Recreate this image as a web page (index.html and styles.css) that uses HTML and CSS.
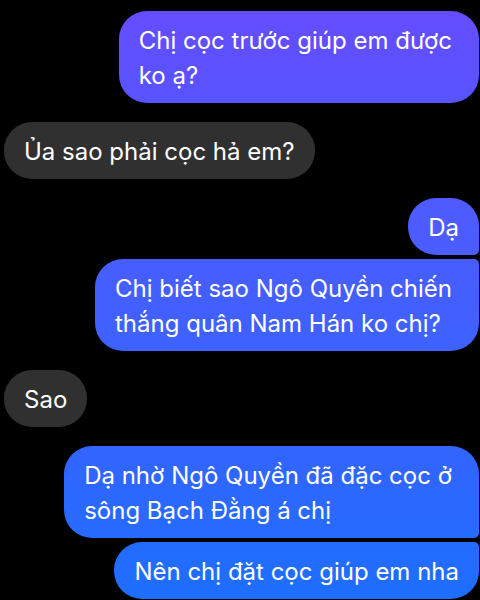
FILE: index.html
```html
<!DOCTYPE html>
<html lang="vi">
<head>
<meta charset="utf-8">
<meta name="viewport" content="width=device-width, initial-scale=1">
<title>Chat</title>
<link rel="stylesheet" href="styles.css">
</head>
<body>
<main class="chat">
  <section class="group sent">
    <p class="bubble multiline violet">Chị cọc trước giúp em được<br>ko ạ?</p>
  </section>
  <section class="group received">
    <p class="bubble">Ủa sao phải cọc hả em?</p>
  </section>
  <section class="group sent">
    <p class="bubble indigo first">Dạ</p>
    <p class="bubble multiline azure last">Chị biết sao Ngô Quyền chiến<br>thắng quân Nam Hán ko chị?</p>
  </section>
  <section class="group received">
    <p class="bubble">Sao</p>
  </section>
  <section class="group sent">
    <p class="bubble multiline blue first">Dạ nhờ Ngô Quyền đã đặc cọc ở<br>sông Bạch Đằng á chị</p>
    <p class="bubble bright last">Nên chị đặt cọc giúp em nha</p>
  </section>
</main>
</body>
</html>
```

FILE: styles.css
```css
* {
  box-sizing: border-box;
}

body {
  margin: 0;
  background: #000;
  color: #fff;
  font-family: Inter, "Liberation Sans", sans-serif;
  font-size: 24px;
  font-weight: 400;
  line-height: 35px;
}

.chat {
  display: flex;
  flex-direction: column;
  gap: 19px;
  padding: 11px 1px 1px 4px;
}

.group {
  display: flex;
  flex-direction: column;
  gap: 4px;
}

.sent {
  align-items: flex-end;
}

.received {
  align-items: flex-start;
}

.bubble {
  margin: 0;
  padding: 12px 20px 10px;
  border-radius: 28px;
  background: #303030;
}

.multiline {
  padding-right: 27px;
}

.first {
  border-bottom-right-radius: 5px;
}

.last {
  border-top-right-radius: 5px;
}

.violet {
  background: linear-gradient(#654dff, #5853ff);
}

.indigo {
  background: linear-gradient(#4f5aff, #4a5dff);
}

.azure {
  background: linear-gradient(#485dff, #3d62ff);
}

.blue {
  background: linear-gradient(#3364ff, #266bff);
}

.bright {
  background: linear-gradient(#246bff, #1e6eff);
}
```
